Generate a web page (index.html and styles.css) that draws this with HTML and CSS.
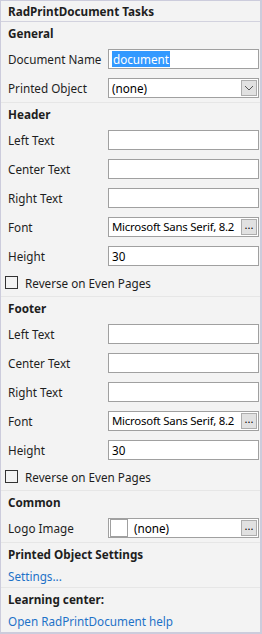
FILE: index.html
```html
<!DOCTYPE html>
<html>
<head>
<meta charset="utf-8">
<link rel="stylesheet" href="styles.css">
</head>
<body>
<div class="panel">
  <div class="title">RadPrintDocument Tasks</div>

  <div class="section">
    <div class="heading">General</div>
    <div class="row"><span class="label">Document Name</span><div class="box"><span class="sel">document</span></div></div>
    <div class="row"><span class="label">Printed Object</span><div class="box"><span class="val">(none)</span><span class="btn drop"><svg width="10" height="6" viewBox="0 0 10 6"><path d="M1 1 L5 5 L9 1" fill="none" stroke="#555" stroke-width="1"/></svg></span></div></div>
  </div>

  <div class="section">
    <div class="heading">Header</div>
    <div class="row"><span class="label">Left Text</span><div class="box"></div></div>
    <div class="row"><span class="label">Center Text</span><div class="box"></div></div>
    <div class="row"><span class="label">Right Text</span><div class="box"></div></div>
    <div class="row"><span class="label">Font</span><div class="box"><span class="val font">Microsoft Sans Serif, 8.2</span><span class="btn">...</span></div></div>
    <div class="row"><span class="label">Height</span><div class="box"><span class="val">30</span></div></div>
    <div class="check"><span class="cb"></span><span>Reverse on Even Pages</span></div>
  </div>

  <div class="section">
    <div class="heading">Footer</div>
    <div class="row"><span class="label">Left Text</span><div class="box"></div></div>
    <div class="row"><span class="label">Center Text</span><div class="box"></div></div>
    <div class="row"><span class="label">Right Text</span><div class="box"></div></div>
    <div class="row"><span class="label">Font</span><div class="box"><span class="val font">Microsoft Sans Serif, 8.2</span><span class="btn">...</span></div></div>
    <div class="row"><span class="label">Height</span><div class="box"><span class="val">30</span></div></div>
    <div class="check"><span class="cb"></span><span>Reverse on Even Pages</span></div>
  </div>

  <div class="section">
    <div class="heading">Common</div>
    <div class="row"><span class="label">Logo Image</span><div class="box"><span class="swatch"></span><span class="val none">(none)</span><span class="btn">...</span></div></div>
  </div>

  <div class="section">
    <div class="heading">Printed Object Settings</div>
    <div class="link">Settings...</div>
  </div>

  <div class="section last">
    <div class="heading">Learning center:</div>
    <div class="link">Open RadPrintDocument help</div>
  </div>
</div>
</body>
</html>
```

FILE: styles.css
```css
html, body {
  margin: 0;
  padding: 0;
  background: #f3f3f3;
}
body {
  font-family: "Noto Sans", "Open Sans", sans-serif;
  font-size: 11.7px;
  color: #1e1e1e;
}
.panel {
  width: 262px;
  height: 634px;
  box-sizing: border-box;
  border: 1px solid #ccccdc;
  border-right-width: 2px;
  border-bottom-width: 2px;
  background: #f3f3f3;
  display: flex;
  flex-direction: column;
}
.title {
  height: 20px;
  line-height: 20px;
  padding-left: 7px;
  font-weight: bold;
  border-bottom: 1px solid #d2d2de;
}
.section {
  display: flex;
  flex-direction: column;
  border-bottom: 1px solid #e6e6e6;
}
.section.last {
  border-bottom: none;
}
.heading {
  height: 22px;
  line-height: 22px;
  padding-left: 7px;
  font-weight: bold;
}
.row {
  height: 29px;
  display: flex;
  align-items: center;
  padding-right: 1px;
}
.label {
  width: 100px;
  padding-left: 7px;
}
.box {
  box-sizing: border-box;
  width: 151px;
  height: 20px;
  border: 1px solid #a0a0a0;
  background: #fff;
  display: flex;
  align-items: center;
  padding-left: 3px;
  padding-right: 1px;
  color: #000;
}
.val {
  flex: 1;
  min-width: 0;
  white-space: nowrap;
  overflow: hidden;
}
.val.font {
  font-size: 11.4px;
  letter-spacing: -0.22px;
}
.val.none {
  padding-left: 6px;
}
.sel {
  background: #3399ff;
  color: #fff;
  line-height: 16px;
  padding: 0 1px;
}
.btn {
  box-sizing: border-box;
  flex: none;
  width: 16px;
  height: 16px;
  background: #e1e1e1;
  border: 1px solid #adadad;
  display: flex;
  align-items: center;
  justify-content: center;
  font-size: 11px;
  line-height: 10px;
  padding-bottom: 3px;
  color: #000;
}
.btn.drop {
  padding-bottom: 0;
  padding-top: 1px;
}
.swatch {
  box-sizing: border-box;
  flex: none;
  width: 18px;
  height: 18px;
  border: 1px solid #a0a0a0;
  background: #fff;
  margin-left: -2px;
}
.check {
  height: 26px;
  display: flex;
  align-items: center;
  padding-left: 4px;
  padding-bottom: 1px;
  box-sizing: border-box;
}
.cb {
  box-sizing: border-box;
  width: 13px;
  height: 13px;
  border: 1px solid #333;
  margin-right: 7px;
}
.link {
  height: 22px;
  line-height: 22px;
  padding-left: 7px;
  color: #1e72c8;
}
```
